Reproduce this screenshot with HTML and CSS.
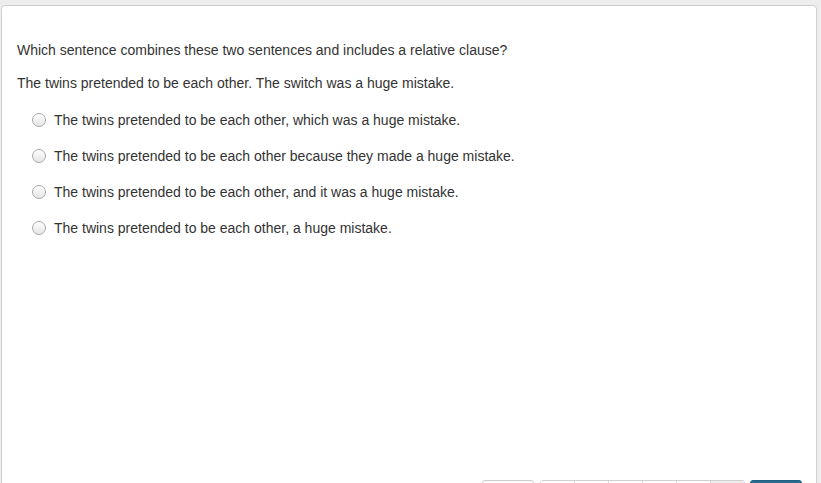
FILE: index.html
```html
<!DOCTYPE html>
<html>
<head>
<meta charset="utf-8">
<link rel="stylesheet" href="styles.css">
</head>
<body>
<div class="frame">
  <div class="card">
    <div class="content">
      <p class="question">Which sentence combines these two sentences and includes a relative clause?</p>
      <p class="prompt">The twins pretended to be each other. The switch was a huge mistake.</p>
      <ul class="options">
        <li class="option"><span class="radio"></span><span>The twins pretended to be each other, which was a huge mistake.</span></li>
        <li class="option"><span class="radio"></span><span>The twins pretended to be each other because they made a huge mistake.</span></li>
        <li class="option"><span class="radio"></span><span>The twins pretended to be each other, and it was a huge mistake.</span></li>
        <li class="option"><span class="radio"></span><span>The twins pretended to be each other, a huge mistake.</span></li>
      </ul>
    </div>
    <div class="footer">
      <div class="btn btn-default"></div>
      <div class="pager">
        <div class="seg"></div>
        <div class="seg"></div>
        <div class="seg"></div>
        <div class="seg"></div>
        <div class="seg"></div>
        <div class="seg seg-active"></div>
      </div>
      <div class="btn btn-primary"></div>
    </div>
  </div>
</div>
</body>
</html>
```

FILE: styles.css
```css
html, body {
  margin: 0;
  padding: 0;
  height: 100%;
  overflow: hidden;
}
body {
  background: #ededed;
  font-family: "Liberation Sans", Arial, sans-serif;
  font-size: 14px;
  color: #333;
}
.frame {
  padding: 5px 4px 0 1px;
}
.card {
  background: #fff;
  border: 1px solid #cfcfcf;
  border-radius: 4px 4px 0 0;
  height: 520px;
  box-sizing: border-box;
  display: flex;
  flex-direction: column;
}
.content {
  padding: 35px 15px 0 15px;
}
.question {
  margin: 0;
  line-height: 18px;
}
.prompt {
  margin: 15px 0 0 0;
  line-height: 18px;
}
.options {
  list-style: none;
  margin: 19px 0 0 0;
  padding: 0 0 0 15px;
}
.option {
  display: flex;
  align-items: center;
  height: 18px;
  margin-bottom: 18px;
}
.radio {
  width: 12px;
  height: 12px;
  border-radius: 50%;
  border: 1px solid #a9a9a9;
  background: linear-gradient(#fdfdfd, #e6e6e6);
  box-shadow: inset 0 1px 1px rgba(255,255,255,0.8);
  margin-right: 8px;
  flex: none;
}
.footer {
  margin-top: auto;
  display: flex;
  justify-content: flex-end;
  align-items: flex-start;
  padding: 0 14px 0 0;
  height: 44px;
}
.btn {
  width: 52px;
  height: 34px;
  border-radius: 3px;
  box-sizing: border-box;
}
.btn-default {
  background: #fafafa;
  border: 1px solid #cdcdcd;
  margin-right: 6px;
}
.btn-primary {
  background: #2a6b8e;
  border: 1px solid #22607f;
  margin-left: 5px;
}
.pager {
  display: flex;
  width: 205px;
  border: 1px solid #d0d0d0;
  border-radius: 3px;
  overflow: hidden;
  height: 34px;
  box-sizing: border-box;
}
.seg {
  flex: 1;
  border-left: 1px solid #d6d6d6;
  background: #fff;
  height: 32px;
}
.seg:first-child {
  border-left: 0;
}
.seg-active {
  background: #ececec;
}
```
